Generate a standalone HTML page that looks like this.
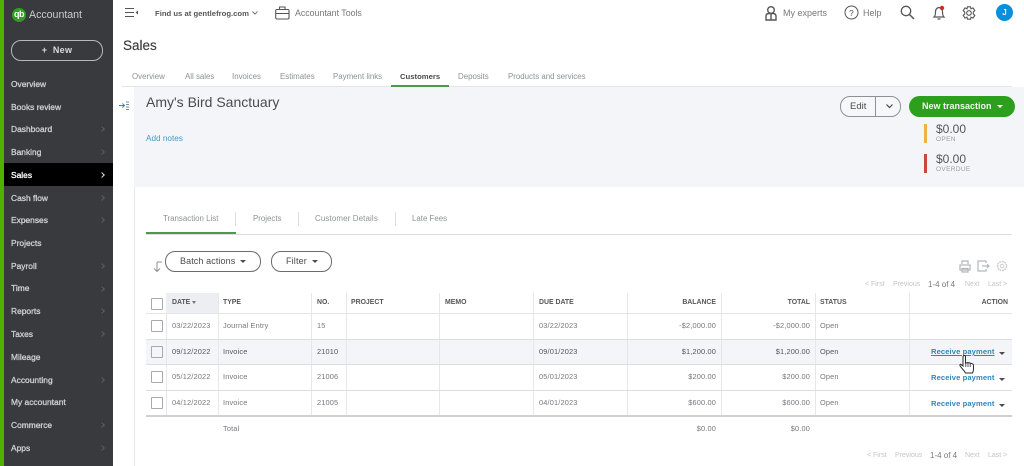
<!DOCTYPE html>
<html><head><meta charset="utf-8"><style>
html,body{margin:0;padding:0;background:#fff}
#p{position:relative;width:1024px;height:466px;overflow:hidden;background:#fff;font-family:"Liberation Sans",sans-serif;color:#6b6c72;filter:blur(.3px)}
#p div,#p span.t{position:absolute}
.t{white-space:nowrap;line-height:12px}
.n{left:11px;color:#cfd0d2;font-size:8.4px;-webkit-text-stroke:.3px #cfd0d2;letter-spacing:.02px}
.c{font-size:7.4px;color:#77787d;letter-spacing:.15px}
.h{font-size:6.9px;font-weight:bold;color:#55565b}
.r{text-align:right}
.tab{font-size:7.9px;color:#8d9096;top:71px}
.st{font-size:7.9px;color:#8d9096;top:213px}
.ar{left:100px;width:3px;height:3px;border-top:1px solid #5c5d60;border-right:1px solid #5c5d60;transform:rotate(45deg)}
.vl{width:1px;background:#e6e7ea;top:293px;height:123px}
.hl{left:146px;width:866px;height:1px;background:#dcdde0}
.cb{left:151px;width:10px;height:10px;border:1px solid #a8a9ad;background:#fff;border-radius:1px}
.rp{font-size:7.6px;font-weight:bold;color:#2f86b8;letter-spacing:.1px}
.tri{width:0;height:0;border-left:3px solid transparent;border-right:3px solid transparent;border-top:3px solid #4a4b50}
.pg{font-size:7px;color:#c2c4c8}
svg{position:absolute;overflow:visible}
</style></head><body><div id="p">

<!-- sidebar -->
<div style="left:0;top:0;width:4px;height:466px;background:#4fb100"></div>
<div style="left:4px;top:0;width:109px;height:466px;background:#393a3d"></div>
<div style="left:12px;top:8px;width:14px;height:14px;border-radius:50%;background:#2ca01c;color:#fff;font-size:9px;font-weight:bold;line-height:13px;text-align:center;letter-spacing:-.5px">qb</div>
<span class="t" style="left:29px;top:9px;font-size:10.6px;color:#c9cacc;">Accountant</span>
<div style="left:11px;top:40px;width:90px;height:19px;border:1px solid #b7b8ba;border-radius:10px;color:#d8d9da;font-size:9px;font-weight:bold;line-height:19px;text-align:center;letter-spacing:.3px">+&nbsp;&nbsp;New</div>

<span class="t n" style="top:78px">Overview</span>
<span class="t n" style="top:101px">Books review</span>
<span class="t n" style="top:123px">Dashboard</span><div class="ar" style="top:127px"></div>
<span class="t n" style="top:146px">Banking</span><div class="ar" style="top:150px"></div>
<div style="left:4px;top:163px;width:109px;height:23px;background:#000"></div>
<span class="t n" style="top:169px;color:#fff;-webkit-text-stroke:.3px #fff">Sales</span><div class="ar" style="top:173px;border-color:#ddd"></div>
<span class="t n" style="top:192px">Cash flow</span><div class="ar" style="top:196px"></div>
<span class="t n" style="top:214px">Expenses</span><div class="ar" style="top:218px"></div>
<span class="t n" style="top:237px">Projects</span>
<span class="t n" style="top:260px">Payroll</span><div class="ar" style="top:264px"></div>
<span class="t n" style="top:282px">Time</span><div class="ar" style="top:287px"></div>
<span class="t n" style="top:305px">Reports</span><div class="ar" style="top:309px"></div>
<span class="t n" style="top:328px">Taxes</span><div class="ar" style="top:332px"></div>
<span class="t n" style="top:351px">Mileage</span>
<span class="t n" style="top:374px">Accounting</span><div class="ar" style="top:378px"></div>
<span class="t n" style="top:396px">My accountant</span>
<span class="t n" style="top:419px">Commerce</span><div class="ar" style="top:423px"></div>
<span class="t n" style="top:442px">Apps</span><div class="ar" style="top:446px"></div>

<!-- top bar -->
<svg style="left:125px;top:8px" width="14" height="10"><path d="M0 .5H9M0 4.5H9M0 8.5H9" stroke="#55565b" fill="none"/><path d="M13 2.5V6.5L10.5 4.5Z" fill="#55565b"/></svg>
<span class="t" style="left:155px;top:8px;font-size:7.7px;font-weight:bold;color:#55565b">Find us at gentlefrog.com</span>
<svg style="left:252px;top:11px" width="6" height="4"><path d="M.5 .5L3 3L5.500 .5" stroke="#77787d" fill="none"/></svg>
<svg style="left:275px;top:6px" width="15" height="14"><rect x=".7" y="3.500" width="13.300" height="9.500" rx="1.200" stroke="#55565b" fill="none" stroke-width="1.100"/><path d="M4.500 3.500V1H10V3.500M1 7.500H14" stroke="#55565b" fill="none" stroke-width="1.100"/></svg>
<span class="t" style="left:295px;top:7px;font-size:8.800px;color:#77787d">Accountant Tools</span>

<svg style="left:765px;top:6px" width="12" height="15"><circle cx="6" cy="4" r="3.300" stroke="#55565b" fill="none" stroke-width="1.400"/><path d="M1 14V10.500Q1 7.500 4 7.500H8Q11 7.500 11 10.500V14ZM6 8V14" stroke="#55565b" fill="none" stroke-width="1.400"/></svg>
<span class="t" style="left:783px;top:7px;font-size:9px;color:#77787d">My experts</span>
<svg style="left:844px;top:5px" width="15" height="15"><circle cx="7.500" cy="7.500" r="6.500" stroke="#55565b" fill="none"/></svg>
<span class="t" style="left:849px;top:6.500px;font-size:8.500px;color:#55565b">?</span>
<span class="t" style="left:863px;top:7px;font-size:9px;color:#77787d">Help</span>
<svg style="left:900px;top:5px" width="15" height="15"><circle cx="6" cy="6" r="4.700" stroke="#55565b" fill="none" stroke-width="1.300"/><path d="M9.500 9.500L14 14" stroke="#55565b" stroke-width="1.500"/></svg>
<svg style="left:932px;top:5px" width="14" height="16"><path d="M2 12Q3.500 10.500 3.500 7Q3.500 3 7 2.500Q10.500 3 10.500 7Q10.500 10.500 12 12ZM5.500 14H8.500" stroke="#55565b" fill="none" stroke-width="1.200"/><circle cx="10" cy="3" r="2.200" fill="#d52b1e"/></svg>
<svg style="left:962px;top:6px" width="14" height="14"><path d="M5.500 .8H8.500L9 2.800L11 1.900L12.800 4.500L11.300 6V8L12.800 9.500L11 12.100L9 11.200L8.500 13.200H5.500L5 11.200L3 12.100L1.200 9.500L2.700 8V6L1.200 4.500L3 1.900L5 2.800Z" stroke="#55565b" fill="none" stroke-width="1.100"/><circle cx="7" cy="7" r="2.300" stroke="#55565b" fill="none" stroke-width="1.100"/></svg>
<div style="left:996px;top:4px;width:17px;height:17px;border-radius:50%;background:#0a8fdc;color:#fff;font-size:8px;font-weight:bold;line-height:17px;text-align:center">J</div>

<span class="t" style="left:123px;top:38px;font-size:13.500px;line-height:16px;color:#393a3d;-webkit-text-stroke:.15px #393a3d">Sales</span>

<!-- tabs -->
<span class="t tab" style="left:132px">Overview</span>
<span class="t tab" style="left:185px">All sales</span>
<span class="t tab" style="left:232px">Invoices</span>
<span class="t tab" style="left:280px">Estimates</span>
<span class="t tab" style="left:333px">Payment links</span>
<span class="t tab" style="left:400px;color:#4a4b50;font-weight:bold;font-size:7.700px">Customers</span>
<span class="t tab" style="left:458px">Deposits</span>
<span class="t tab" style="left:508px">Products and services</span>
<div style="left:122px;top:86px;width:890px;height:1px;background:#e4e5e8"></div>
<div style="left:391px;top:85px;width:58px;height:3px;background:#4a9a47"></div>

<!-- customer header -->
<div style="left:134px;top:87px;width:890px;height:100px;background:#f3f5f8"></div>
<div style="left:134px;top:187px;width:1px;height:279px;background:#e8e9ec"></div>
<svg style="left:119px;top:101px" width="11" height="9"><path d="M0 4.500H5M3.500 2.500L5.500 4.500L3.500 6.500" stroke="#2f86b8" fill="none"/><path d="M7 1H10M7 3.500H10M7 6H10M7 8.500H10" stroke="#6b8fa8"/></svg>
<span class="t" style="left:146px;top:94px;font-size:14px;line-height:17px;color:#4a4b50">Amy's Bird Sanctuary</span>
<span class="t" style="left:146px;top:133px;font-size:8.200px;color:#4a98c4">Add notes</span>

<div style="left:840px;top:96px;width:59px;height:19px;border:1px solid #8d9096;border-radius:10px;background:#f6f7f9"></div>
<div style="left:875px;top:96px;width:1px;height:21px;background:#8d9096"></div>
<span class="t" style="left:850px;top:101px;font-size:9.500px;color:#4a4b50">Edit</span>
<svg style="left:886px;top:104px" width="7" height="5"><path d="M.5 .5L3.500 3.500L6.500 .5" stroke="#4a4b50" fill="none" stroke-width="1.200"/></svg>
<div style="left:909px;top:96px;width:106px;height:21px;border-radius:11px;background:#2ca01c"></div>
<span class="t" style="left:922px;top:100px;font-size:9px;font-weight:bold;color:#eef8ec">New transaction</span>
<div class="tri" style="left:997px;top:105px;border-top-color:#fff"></div>

<div style="left:924px;top:124px;width:3px;height:19px;background:#eeb23f"></div>
<span class="t" style="left:936px;top:123px;font-size:12px;line-height:13px;color:#55565b">$0.00</span>
<span class="t" style="left:936px;top:135px;font-size:6.500px;line-height:10px;color:#9a9ca3;letter-spacing:.35px">OPEN</span>
<div style="left:924px;top:154px;width:3px;height:19px;background:#c9483b"></div>
<span class="t" style="left:936px;top:153px;font-size:12px;line-height:13px;color:#55565b">$0.00</span>
<span class="t" style="left:936px;top:165px;font-size:6.500px;line-height:10px;color:#9a9ca3;letter-spacing:.35px">OVERDUE</span>

<!-- sub tabs -->
<span class="t st" style="left:163px">Transaction List</span>
<span class="t st" style="left:253px">Projects</span>
<span class="t st" style="left:315px;letter-spacing:.15px">Customer Details</span>
<span class="t st" style="left:412px">Late Fees</span>
<div style="left:235px;top:212px;width:1px;height:14px;background:#dcdde0"></div>
<div style="left:298px;top:212px;width:1px;height:14px;background:#dcdde0"></div>
<div style="left:395px;top:212px;width:1px;height:14px;background:#dcdde0"></div>
<div style="left:146px;top:234px;width:866px;height:1px;background:#dcdde0"></div>
<div style="left:146px;top:232px;width:90px;height:2px;background:#4a9a47"></div>

<!-- toolbar -->
<svg style="left:152px;top:261px" width="12" height="12"><path d="M5 1V10.500M2 7.500L5 10.500L8 7.500M5 1H10" stroke="#8d9096" fill="none"/></svg>
<div style="left:165px;top:251px;width:94px;height:19px;border:1px solid #6b6c72;border-radius:10px"></div>
<span class="t" style="left:180px;top:255px;font-size:9px;color:#4a4b50;letter-spacing:.1px">Batch actions</span>
<div class="tri" style="left:240px;top:260px"></div>
<div style="left:271px;top:251px;width:59px;height:19px;border:1px solid #6b6c72;border-radius:10px"></div>
<span class="t" style="left:286px;top:255px;font-size:9px;color:#4a4b50;letter-spacing:.15px">Filter</span>
<div class="tri" style="left:312px;top:260px"></div>

<svg style="left:959px;top:260px" width="12" height="13"><path d="M3 4V1H9V4M1 5H11V10H1ZM3 8.500H9V12H3Z" stroke="#b4b6ba" fill="none" stroke-width="1.200"/></svg>
<svg style="left:977px;top:260px" width="13" height="12"><path d="M9 3V1H1V11H9V9M5 6H12M10 4L12 6L10 8" stroke="#b4b6ba" fill="none" stroke-width="1.200"/></svg>
<svg style="left:996px;top:260px" width="12" height="12"><circle cx="6" cy="6" r="4.500" stroke="#cfd0d3" fill="none" stroke-width="1.500" stroke-dasharray="2 .6"/><circle cx="6" cy="6" r="1.800" stroke="#cfd0d3" fill="none"/></svg>

<span class="t pg" style="left:865px;top:279px">&lt; First</span>
<span class="t pg" style="left:893px;top:279px">Previous</span>
<span class="t pg" style="left:928px;top:279px;font-size:8px;color:#77787d">1-4 of 4</span>
<span class="t pg" style="left:965px;top:279px">Next</span>
<span class="t pg" style="left:988px;top:279px">Last &gt;</span>

<!-- table -->
<div style="left:166px;top:293px;width:52px;height:20px;background:#eceef1"></div>
<div style="left:146px;top:339px;width:866px;height:25px;background:#f3f5f8"></div>
<div class="vl" style="left:166px;top:313px;height:103px"></div>
<div class="vl" style="left:218px"></div><div class="vl" style="left:311px"></div><div class="vl" style="left:346px"></div><div class="vl" style="left:439px"></div><div class="vl" style="left:533px"></div><div class="vl" style="left:627px"></div><div class="vl" style="left:721px"></div><div class="vl" style="left:815px"></div><div class="vl" style="left:909px"></div>
<div class="hl" style="top:313px;background:#e4e5e8"></div>
<div class="hl" style="top:339px"></div>
<div class="hl" style="top:364px"></div>
<div class="hl" style="top:390px"></div>
<div class="hl" style="top:415px;height:2px;background:#cfd0d3"></div>

<div class="cb" style="top:298px"></div><div class="cb" style="top:320px"></div><div class="cb" style="top:346px;background:#f3f5f8"></div><div class="cb" style="top:371px"></div><div class="cb" style="top:397px"></div>

<span class="t h" style="left:172px;top:297px">DATE</span>
<div class="tri" style="left:192px;top:301px;border-left-width:2px;border-right-width:2px;border-top-color:#77787d"></div>
<span class="t h" style="left:223px;top:297px">TYPE</span>
<span class="t h" style="left:317px;top:297px">NO.</span>
<span class="t h" style="left:351px;top:297px">PROJECT</span>
<span class="t h" style="left:445px;top:297px">MEMO</span>
<span class="t h" style="left:539px;top:297px">DUE DATE</span>
<span class="t h r" style="right:308px;top:297px">BALANCE</span>
<span class="t h r" style="right:214px;top:297px">TOTAL</span>
<span class="t h" style="left:820px;top:297px">STATUS</span>
<span class="t h r" style="right:16px;top:297px">ACTION</span>

<span class="t c" style="left:172px;top:320px">03/22/2023</span>
<span class="t c" style="left:223px;top:320px">Journal Entry</span>
<span class="t c" style="left:317px;top:320px">15</span>
<span class="t c" style="left:539px;top:320px">03/22/2023</span>
<span class="t c r" style="right:308px;top:320px">-$2,000.00</span>
<span class="t c r" style="right:214px;top:320px">-$2,000.00</span>
<span class="t c" style="left:820px;top:320px">Open</span>

<span class="t c" style="left:172px;top:346px;color:#55565b">09/12/2022</span>
<span class="t c" style="left:223px;top:346px;color:#55565b">Invoice</span>
<span class="t c" style="left:317px;top:346px;color:#55565b">21010</span>
<span class="t c" style="left:539px;top:346px;color:#55565b">09/01/2023</span>
<span class="t c r" style="right:308px;top:346px;color:#55565b">$1,200.00</span>
<span class="t c r" style="right:214px;top:346px;color:#55565b">$1,200.00</span>
<span class="t c" style="left:820px;top:346px;color:#55565b">Open</span>
<span class="t rp" style="left:931px;top:346px;text-decoration:underline">Receive payment</span>
<div class="tri" style="left:999px;top:352px"></div>

<span class="t c" style="left:172px;top:371px">05/12/2022</span>
<span class="t c" style="left:223px;top:371px">Invoice</span>
<span class="t c" style="left:317px;top:371px">21006</span>
<span class="t c" style="left:539px;top:371px">05/01/2023</span>
<span class="t c r" style="right:308px;top:371px">$200.00</span>
<span class="t c r" style="right:214px;top:371px">$200.00</span>
<span class="t c" style="left:820px;top:371px">Open</span>
<span class="t rp" style="left:931px;top:372px">Receive payment</span>
<div class="tri" style="left:999px;top:378px"></div>

<span class="t c" style="left:172px;top:397px">04/12/2022</span>
<span class="t c" style="left:223px;top:397px">Invoice</span>
<span class="t c" style="left:317px;top:397px">21005</span>
<span class="t c" style="left:539px;top:397px">04/01/2023</span>
<span class="t c r" style="right:308px;top:397px">$600.00</span>
<span class="t c r" style="right:214px;top:397px">$600.00</span>
<span class="t c" style="left:820px;top:397px">Open</span>
<span class="t rp" style="left:931px;top:398px">Receive payment</span>
<div class="tri" style="left:999px;top:404px"></div>

<span class="t c" style="left:223px;top:423px">Total</span>
<span class="t c r" style="right:308px;top:423px">$0.00</span>
<span class="t c r" style="right:214px;top:423px">$0.00</span>

<span class="t pg" style="left:867px;top:450px">&lt; First</span>
<span class="t pg" style="left:895px;top:450px">Previous</span>
<span class="t pg" style="left:930px;top:450px;font-size:8px;color:#77787d">1-4 of 4</span>
<span class="t pg" style="left:965px;top:450px">Next</span>
<span class="t pg" style="left:988px;top:450px">Last &gt;</span>

<!-- cursor -->
<svg style="left:959px;top:355px" width="16" height="20"><path d="M4 2Q4 .5 5.300 .5Q6.500 .5 6.500 2V8L8.800 7.600L11 8L13.500 8.800Q14.500 9.300 14.500 11V14Q14.500 16 13.500 18H6.500Q5.500 16 3.500 14L1 10.800Q.5 9.500 1.800 9.300L4 11Z" fill="#fff" stroke="#2a2a2c" stroke-width="1"/><path d="M6.800 8V12M9 8V12M11.200 8.400V12" stroke="#2a2a2c" stroke-width=".8"/></svg>

</div></body></html>
